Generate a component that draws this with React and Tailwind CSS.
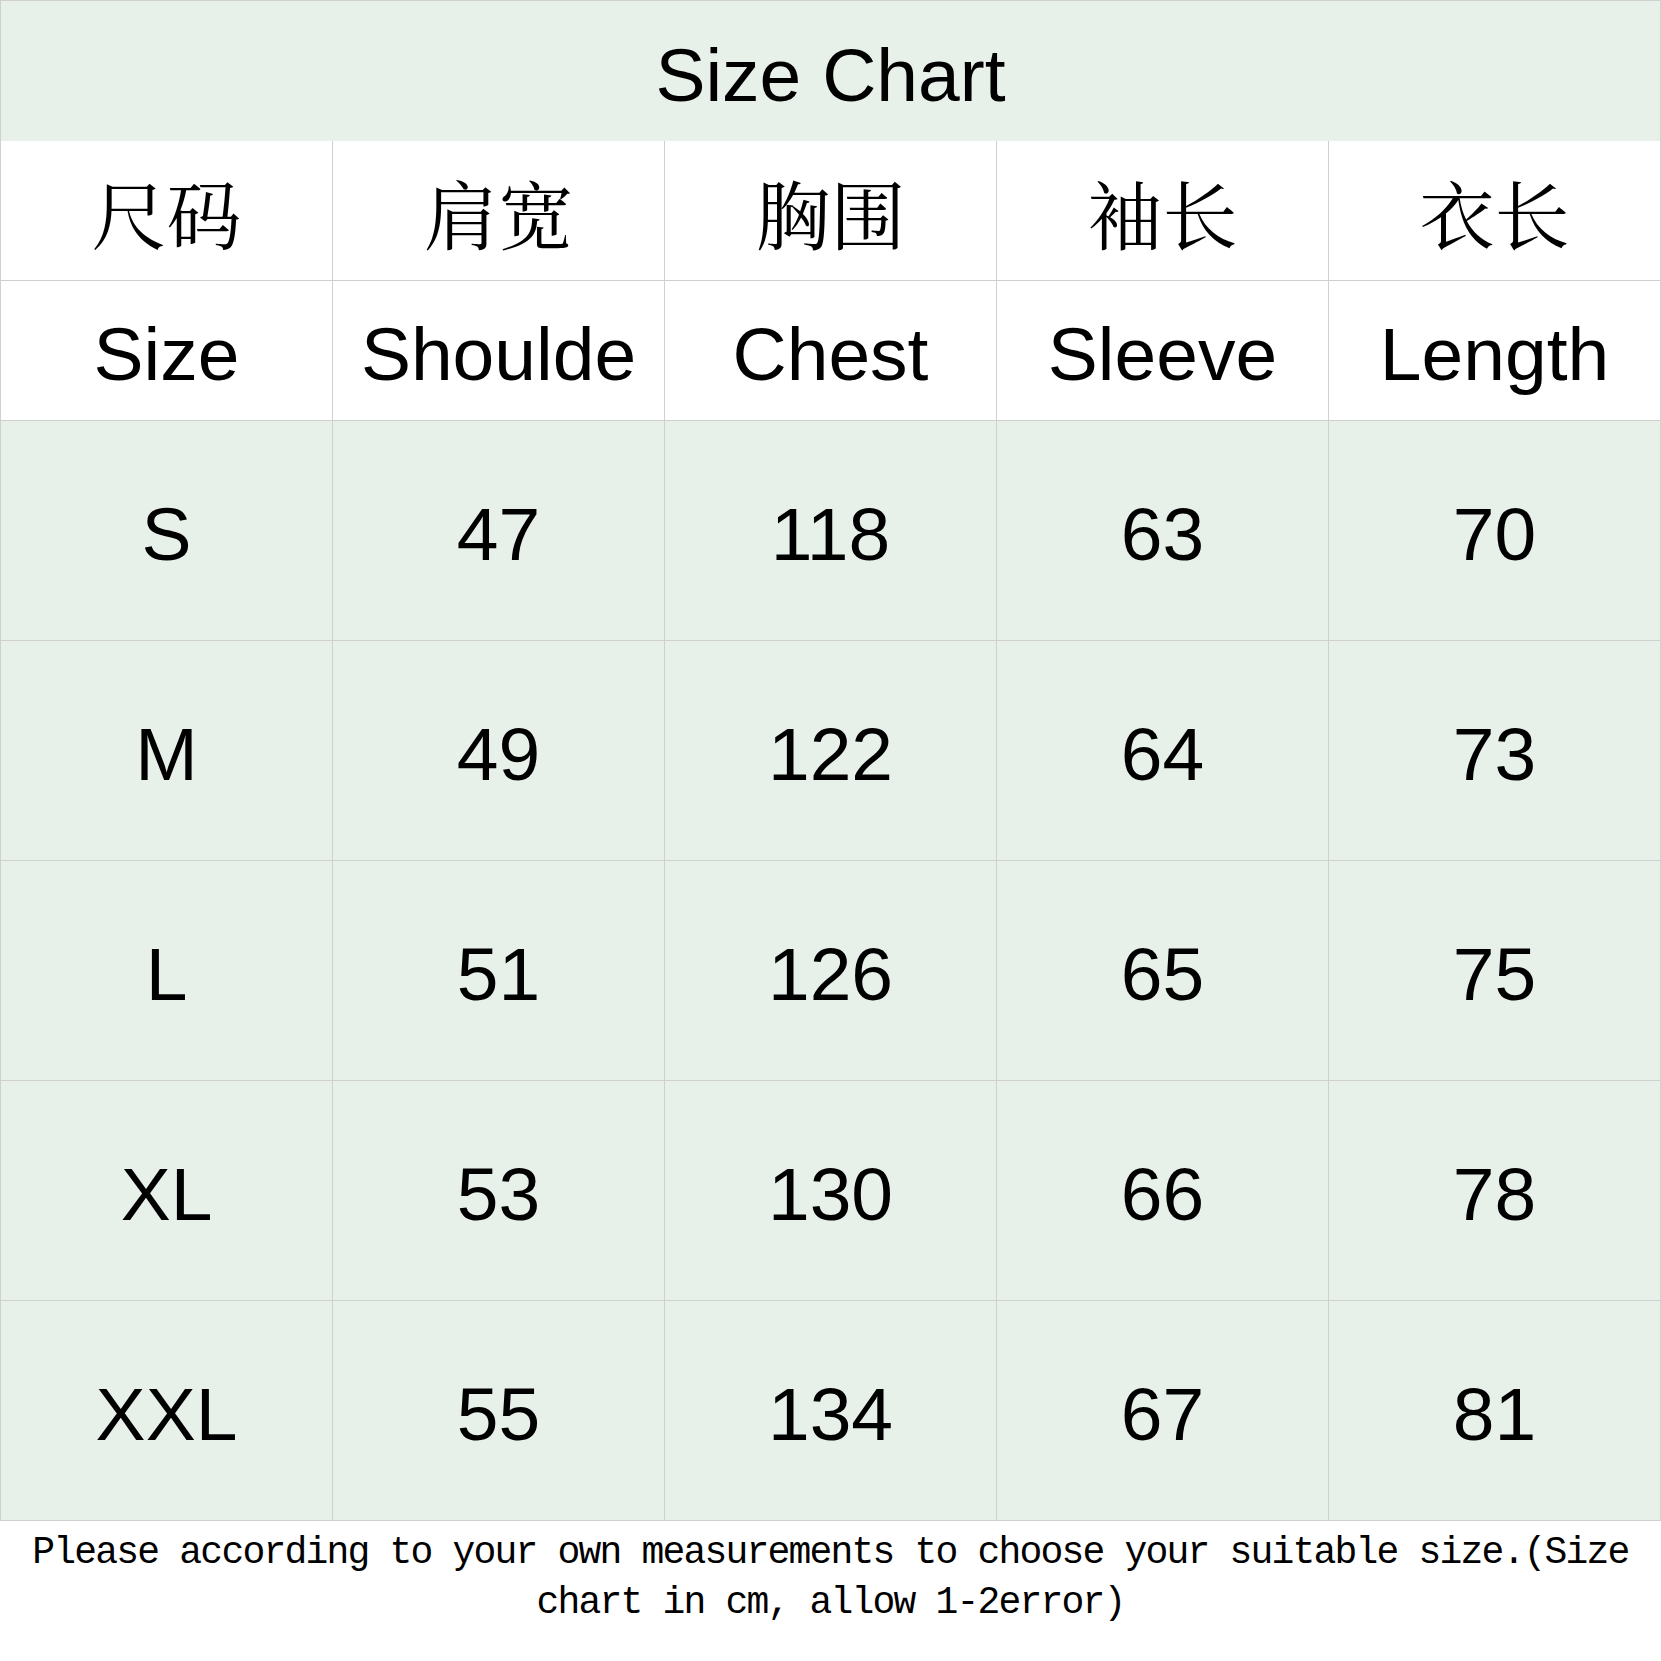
const cnHeaders = ['尺码', '肩宽', '胸围', '袖长', '衣长'];
const enHeaders = ['Size', 'Shoulde', 'Chest', 'Sleeve', 'Length'];

const rows = [
  ['S', '47', '118', '63', '70'],
  ['M', '49', '122', '64', '73'],
  ['L', '51', '126', '65', '75'],
  ['XL', '53', '130', '66', '78'],
  ['XXL', '55', '134', '67', '81'],
];

const sans = "font-['Liberation_Sans',Arial,sans-serif]";

function Cell({ children, className = '' }) {
  return (
    <div
      className={`flex items-center justify-center overflow-hidden whitespace-nowrap border-r border-b border-[#d0d0d0] ${className}`}
    >
      {children}
    </div>
  );
}

export default function App() {
  return (
    <div className="w-[1661px] h-[1661px] bg-white text-black">
      <div className="border-t border-l border-[#d0d0d0]">
        <div
          className={`h-[140px] flex items-center justify-center pt-2 bg-[#e7f1ea] border-r border-[#d0d0d0] text-[75px] leading-none ${sans}`}
        >
          Size Chart
        </div>

        <div className="grid grid-cols-[repeat(5,332px)]">
          {cnHeaders.map((h) => (
            <Cell
              key={h}
              className="h-[140px] bg-white pt-[2px] text-[75px] leading-none font-['Noto_Serif_CJK_SC','Noto_Sans_CJK_SC',serif]"
            >
              {h}
            </Cell>
          ))}
          {enHeaders.map((h) => (
            <Cell key={h} className={`h-[140px] bg-white pt-2 text-[75px] leading-none ${sans}`}>
              {h}
            </Cell>
          ))}
          {rows.map((row) =>
            row.map((v, i) => (
              <Cell
                key={row[0] + i}
                className={`h-[220px] bg-[#e7f1ea] pt-2 text-[75px] leading-none ${sans}`}
              >
                {v}
              </Cell>
            ))
          )}
        </div>
      </div>

      <div className="pt-[7px] text-center text-[38px] leading-[50px] tracking-[-1.8px] font-['Liberation_Mono','Courier_New',monospace]">
        <div>Please according to your own measurements to choose your suitable size.(Size</div>
        <div>chart in cm, allow 1-2error)</div>
      </div>
    </div>
  );
}
